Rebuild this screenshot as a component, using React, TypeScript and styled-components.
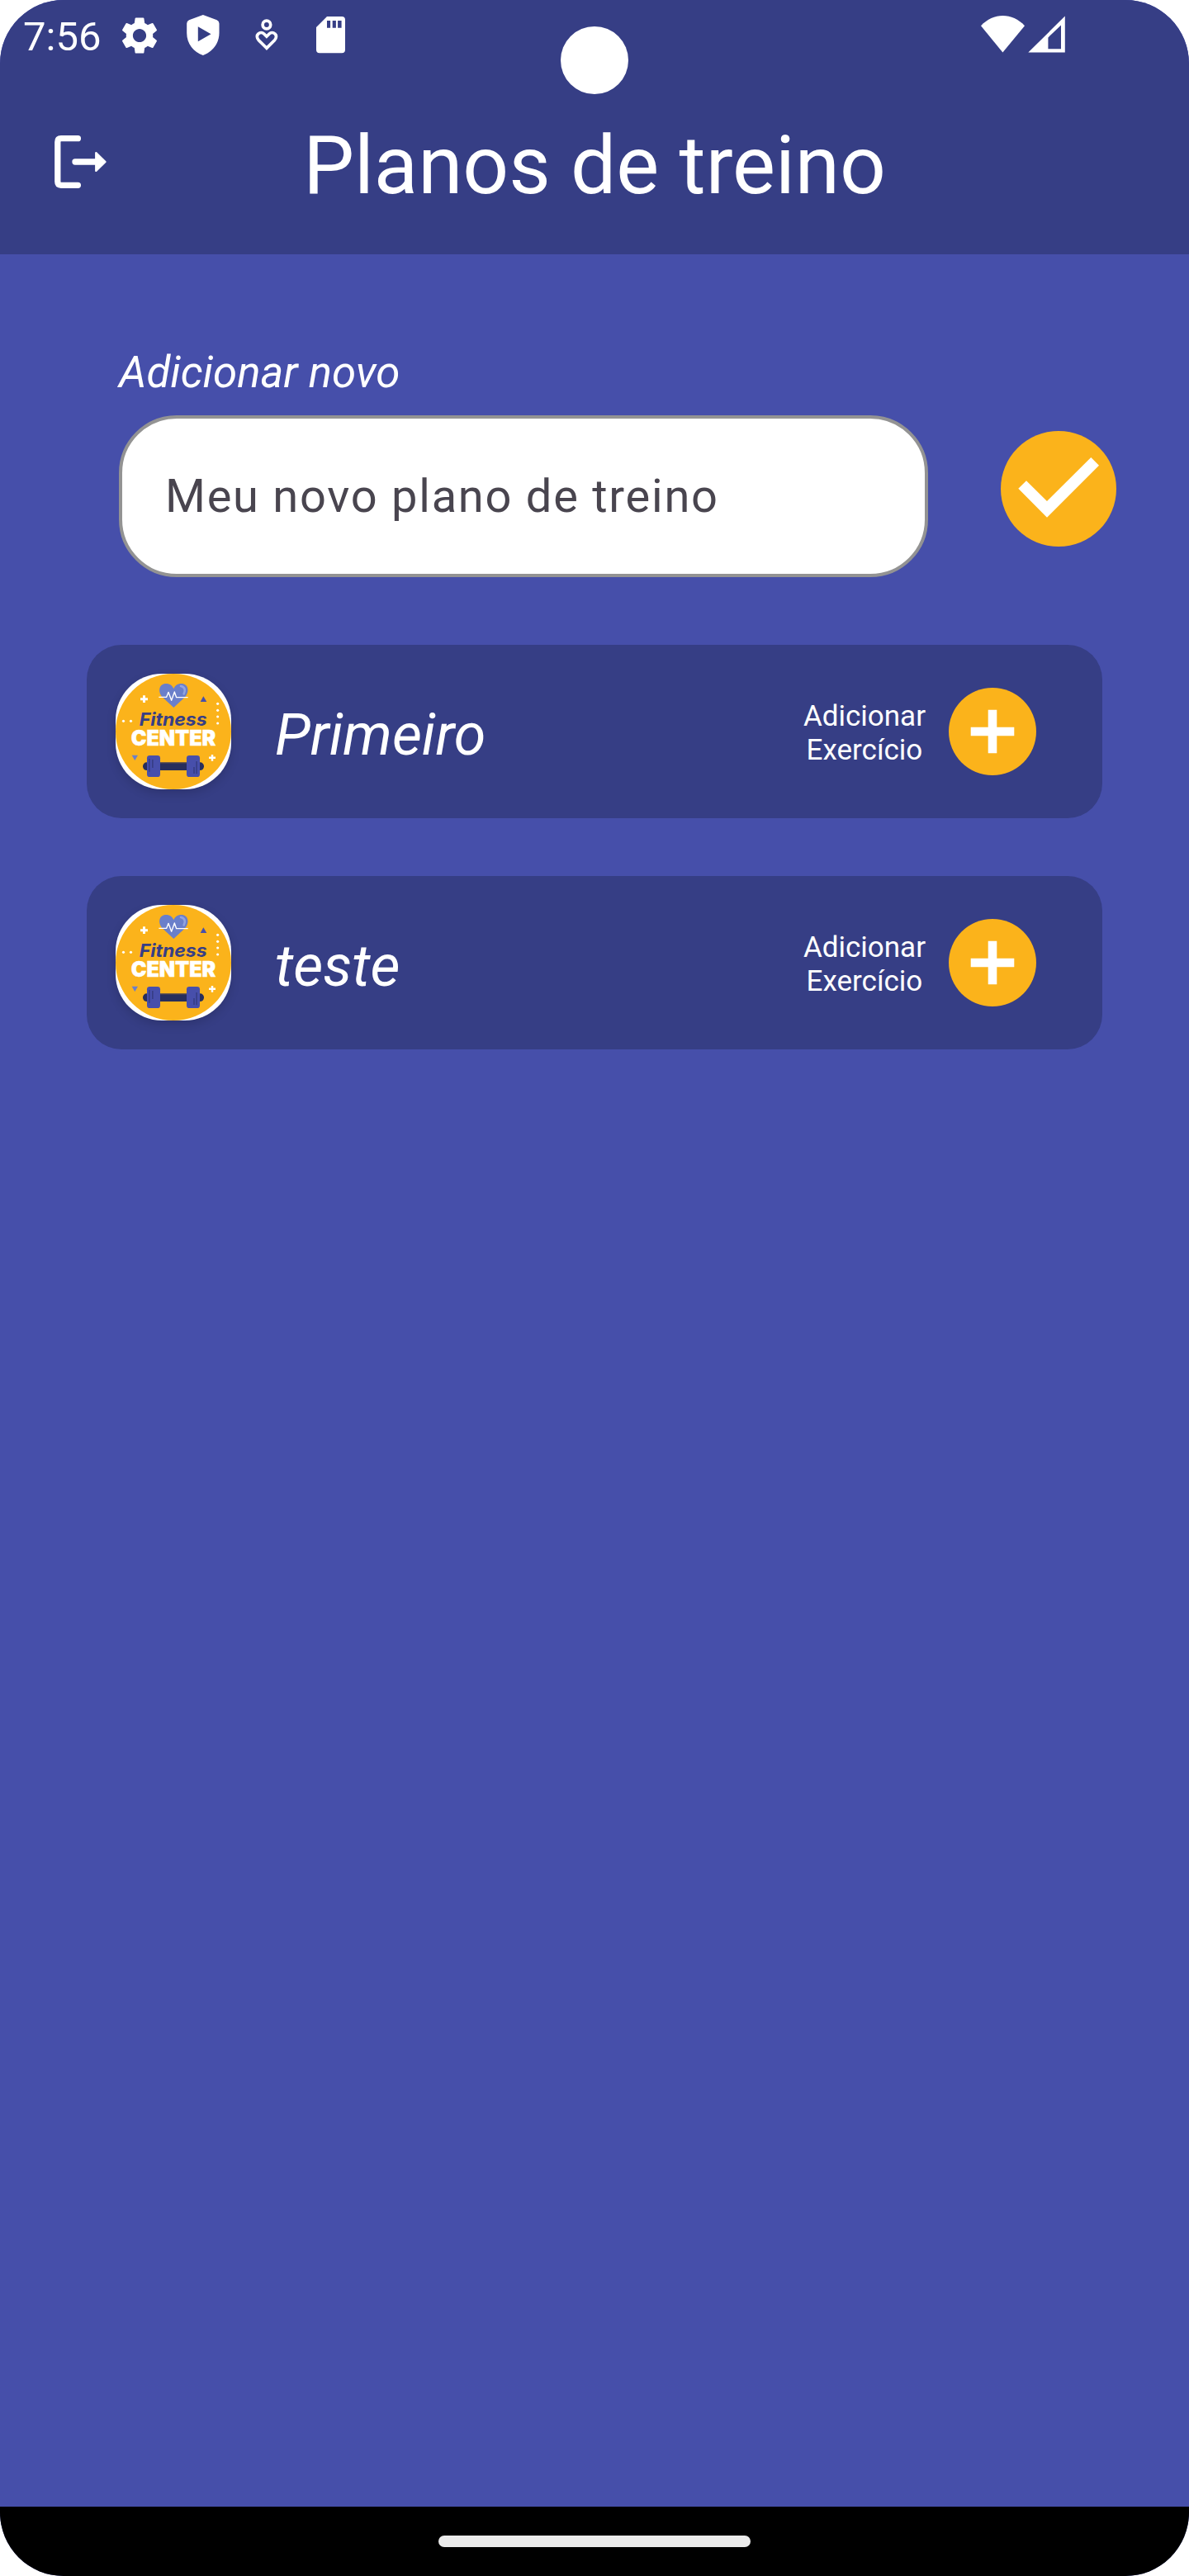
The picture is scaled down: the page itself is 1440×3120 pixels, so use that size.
import React from "react";
import styled, { createGlobalStyle } from "styled-components";
import { MdSettings } from "react-icons/md";

const colors = {
  header: "#363e85",
  page: "#464faa",
  accent: "#fbb31b",
  white: "#ffffff",
};

const GlobalStyle = createGlobalStyle`
  html, body { margin: 0; padding: 0; background: #fff; }
  * { box-sizing: border-box; }
  body { font-family: Roboto, "Noto Sans", sans-serif; }
  button { border: 0; padding: 0; background: none; font: inherit; color: inherit; }
`;

const Screen = styled.div`
  position: relative;
  width: 1440px;
  height: 3120px;
  display: flex;
  flex-direction: column;
  overflow: hidden;
  border-radius: 77px;
  background: ${colors.page};
  color: ${colors.white};
`;

const Header = styled.header`
  flex: none;
  height: 308px;
  background: ${colors.header};
`;

const StatusBar = styled.div`
  height: 84px;
  padding: 0 150px 0 28px;
  display: flex;
  justify-content: space-between;
`;

const StatusGroup = styled.div`
  display: flex;
  align-items: flex-start;
`;

const Clock = styled.span`
  width: 114px;
  padding-top: 16px;
  font-size: 49px;
  line-height: 57px;
`;

const StatusIcon = styled.svg<{ $left?: number }>`
  display: block;
  flex: none;
  height: 84px;
  margin-left: ${(p) => p.$left ?? 0}px;
`;

const GearSlot = styled.span`
  display: flex;
  width: 54px;
  padding-top: 15.5px;
  svg { display: block; width: 54px; height: 54px; }
`;

const Camera = styled.div`
  position: absolute;
  top: 32px;
  left: 679px;
  width: 82px;
  height: 82px;
  border-radius: 50%;
  background: ${colors.white};
`;

const AppBar = styled.div`
  height: 224px;
  display: grid;
  grid-template-columns: 196px 1fr 196px;
  align-items: center;
`;

const LogoutButton = styled.button`
  justify-self: center;
  display: flex;
`;

const Title = styled.h1`
  margin: 0;
  padding-top: 9px;
  text-align: center;
  font-size: 98px;
  line-height: 115px;
  font-weight: 400;
`;

const Content = styled.main`
  flex: 1;
  padding: 112px 105px 0;
`;

const Form = styled.form`
  margin: 0 -17px 82px 39px;
  display: flex;
  align-items: flex-end;
  justify-content: space-between;
`;

const Field = styled.label`
  width: 980px;
  display: flex;
  flex-direction: column;
  gap: 21px;
`;

const FieldLabel = styled.span`
  font-size: 52.8px;
  line-height: 62px;
  font-style: italic;
`;

const TextInput = styled.input`
  height: 196px;
  padding: 0 52px;
  border: 4px solid #939393;
  border-radius: 70px;
  outline: 0;
  background: ${colors.white};
  font-family: inherit;
  font-size: 56px;
  letter-spacing: 1.75px;
  color: #49454f;
  &::placeholder { color: #49454f; opacity: 1; }
`;

const RoundButton = styled.button<{ $size: number; $bottom?: number }>`
  flex: none;
  width: ${(p) => p.$size}px;
  height: ${(p) => p.$size}px;
  margin-bottom: ${(p) => p.$bottom ?? 0}px;
  border-radius: 50%;
  background: ${colors.accent};
  svg { display: block; width: 100%; height: 100%; }
`;

const PlanList = styled.ul`
  margin: 0;
  padding: 0;
  list-style: none;
  display: flex;
  flex-direction: column;
  gap: 70px;
`;

const PlanCard = styled.li`
  height: 210px;
  padding: 0 80px 0 35px;
  display: flex;
  align-items: center;
  border-radius: 42px;
  background: ${colors.header};
`;

const LogoFrame = styled.div`
  flex: none;
  width: 140px;
  height: 140px;
  border-radius: 56px;
  overflow: hidden;
  background: ${colors.white};
  box-shadow: 0 5px 12px rgba(0, 0, 0, 0.15);
  svg { display: block; }
`;

const PlanName = styled.span`
  flex: 1;
  padding: 8px 0 0 53px;
  font-size: 70px;
  line-height: 82px;
  font-style: italic;
`;

const AddLabel = styled.span`
  margin-right: 28px;
  padding-top: 3px;
  text-align: center;
  font-size: 35px;
  line-height: 41px;
`;

const NavBar = styled.footer`
  flex: none;
  height: 84px;
  display: flex;
  align-items: center;
  justify-content: center;
  background: #000;
`;

const NavHandle = styled.div`
  width: 378px;
  height: 14px;
  border-radius: 7px;
  background: #ebebeb;
`;

const ShieldIcon = () => (
  <StatusIcon $left={30} width="40" viewBox="226.5 0 40 84">
    <path
      fill="#fff"
      fillRule="evenodd"
      d="M246.4 18 L263.2 24.2 Q266 25.4 266 28.4 V40 C266 53 257.5 63 246.4 67 C235.2 63 226.7 53 226.7 40 V28.4 Q226.7 25.4 229.5 24.2 Z M240.3 32.3 V50.3 L256 41.2 Z"
    />
  </StatusIcon>
);

const WellbeingIcon = () => (
  <StatusIcon $left={43} width="28" viewBox="309.5 0 28 84">
    <g fill="none" stroke="#fff" strokeWidth="3.7">
      <circle cx="323.4" cy="30" r="4.8" />
      <path d="M323.4 58.3 L313.8 48.7 C311.3 46 311.2 42.8 313.3 41 C315.4 39 318.2 39 320.2 41 L323.4 44.2 L326.6 41 C328.6 39 331.4 39 333.5 41 C335.6 42.8 335.5 46 333 48.7 Z" />
    </g>
  </StatusIcon>
);

const SdCardIcon = () => (
  <StatusIcon $left={45.5} width="35" viewBox="383 0 35 84">
    <path
      fill="#fff"
      fillRule="evenodd"
      d="M396 20 H414 Q418 20 418 24 V60.3 Q418 64.3 414 64.3 H387 Q383 64.3 383 60.3 V33 Z M396 25 V33.7 H400.1 V25 Z M402.7 25 V33.7 H406.9 V25 Z M409.1 25 V33.7 H413.6 V25 Z"
    />
  </StatusIcon>
);

const WifiIcon = () => (
  <StatusIcon width="53" viewBox="1188 0 53 84">
    <path fill="#fff" d="M1214.4 63.5 L1188 31.3 C1203 15 1226 15 1241 31.3 Z" />
  </StatusIcon>
);

const SignalIcon = () => (
  <StatusIcon $left={4} width="45" viewBox="1245 0 45 84">
    <path
      fill="#fff"
      fillRule="evenodd"
      d="M1245.3 63.6 L1289.8 19.5 V63.6 Z M1269.4 45.4 V59.2 H1285 V30.6 Z"
    />
  </StatusIcon>
);

const LogoutIcon = () => (
  <svg width="64" height="64" viewBox="66 164 64 64">
    <path
      d="M94.4 167.7 H74 Q69.8 167.7 69.8 171.9 V220.1 Q69.8 224.3 74 224.3 H94.4 M91 196 H118"
      fill="none"
      stroke="#fff"
      strokeWidth="7.3"
      strokeLinecap="round"
    />
    <path
      d="M116.3 185.2 L127.5 196 L116.3 206.8 Z"
      fill="#fff"
      stroke="#fff"
      strokeWidth="2.4"
      strokeLinejoin="round"
    />
  </svg>
);

const CheckIcon = () => (
  <svg viewBox="0 0 140 140">
    <path fill="#fff" d="M21.3 69.7 L31 60.2 L56 85 L109.3 32 L119 41.7 L56 104.7 Z" />
  </svg>
);

const PlusIcon = () => (
  <svg viewBox="0 0 106 106">
    <path fill="#fff" d="M47.7 26.7 H58.3 V47.7 H79.3 V58.3 H58.3 V79.3 H47.7 V58.3 H26.7 V47.7 H47.7 Z" />
  </svg>
);

const FitnessLogo = () => (
  <svg width="140" height="140" viewBox="30 33 420 420">
    <circle cx="240" cy="243" r="210" fill="#fbb31b" />
    <path
      d="M241 156 L203 121 C180 99 188 69 213 69 C228 69 237 77 241 88 C245 77 254 69 269 69 C294 69 302 99 279 121 Z"
      fill="#6a7fca"
    />
    <path d="M267 78 C282 81 285 94 278 106" fill="none" stroke="#93a4df" strokeWidth="8" strokeLinecap="round" />
    <path
      d="M187 118 H215 L222 100 L233 130 L244 99 L251 119 H293"
      fill="none"
      stroke="#fff"
      strokeWidth="4"
      strokeLinejoin="round"
    />
    <path d="M133.500 112 V138 M120 125 H147" stroke="#fff" strokeWidth="9" />
    <path d="M381 327 V350 M369 338.500 H393" stroke="#fff" strokeWidth="7.500" />
    <path d="M349 115 L361 135 H338 Z" fill="#474fab" />
    <path d="M89 329 H111 L100 348 Z" fill="#6a7fca" />
    <g fill="#fff">
      <circle cx="58.500" cy="205" r="4.700" />
      <circle cx="85.500" cy="205" r="4.700" />
      <circle cx="401" cy="142" r="4.700" />
      <circle cx="401" cy="166" r="4.700" />
      <circle cx="401" cy="189" r="4.700" />
      <circle cx="401" cy="213" r="4.700" />
    </g>
    <text
      x="116"
      y="222"
      fontFamily="Inter, sans-serif"
      fontSize="66"
      fontWeight="700"
      fontStyle="italic"
      fill="#373e86"
      textLength="246"
      lengthAdjust="spacingAndGlyphs"
    >
      Fitness
    </text>
    <text
      x="86"
      y="294"
      fontFamily="Inter, sans-serif"
      fontSize="77"
      fontWeight="900"
      fill="#fff"
      stroke="#fff"
      strokeWidth="1.5"
      textLength="308"
      lengthAdjust="spacingAndGlyphs"
    >
      CENTER
    </text>
    <rect x="129" y="355" width="222" height="29" rx="14" fill="#272e5c" />
    <rect x="190" y="354" width="100" height="4" fill="#6c5b4b" />
    <rect x="144" y="330" width="48" height="78" rx="10" fill="#474fab" />
    <rect x="288" y="330" width="48" height="78" rx="10" fill="#474fab" />
    <path d="M152.500 342 V389 M164.500 345 V375 M324.500 351 V397 M315 372 V396" stroke="#373e86" strokeWidth="5" />
  </svg>
);

const plans = ["Primeiro", "teste"];

export default function App() {
  return (
    <>
      <GlobalStyle />
      <Screen>
        <Header>
          <StatusBar>
            <StatusGroup>
              <Clock>7:56</Clock>
              <GearSlot>
                <MdSettings />
              </GearSlot>
              <ShieldIcon />
              <WellbeingIcon />
              <SdCardIcon />
            </StatusGroup>
            <StatusGroup>
              <WifiIcon />
              <SignalIcon />
            </StatusGroup>
          </StatusBar>
          <AppBar>
            <LogoutButton type="button" aria-label="Sair">
              <LogoutIcon />
            </LogoutButton>
            <Title>Planos de treino</Title>
          </AppBar>
        </Header>
        <Content>
          <Form onSubmit={(e) => e.preventDefault()}>
            <Field>
              <FieldLabel>Adicionar novo</FieldLabel>
              <TextInput placeholder="Meu novo plano de treino" />
            </Field>
            <RoundButton $size={140} $bottom={37} aria-label="Confirmar">
              <CheckIcon />
            </RoundButton>
          </Form>
          <PlanList>
            {plans.map((name) => (
              <PlanCard key={name}>
                <LogoFrame>
                  <FitnessLogo />
                </LogoFrame>
                <PlanName>{name}</PlanName>
                <AddLabel>
                  Adicionar
                  <br />
                  Exercício
                </AddLabel>
                <RoundButton $size={106} type="button" aria-label="Adicionar">
                  <PlusIcon />
                </RoundButton>
              </PlanCard>
            ))}
          </PlanList>
        </Content>
        <NavBar>
          <NavHandle />
        </NavBar>
        <Camera />
      </Screen>
    </>
  );
}
